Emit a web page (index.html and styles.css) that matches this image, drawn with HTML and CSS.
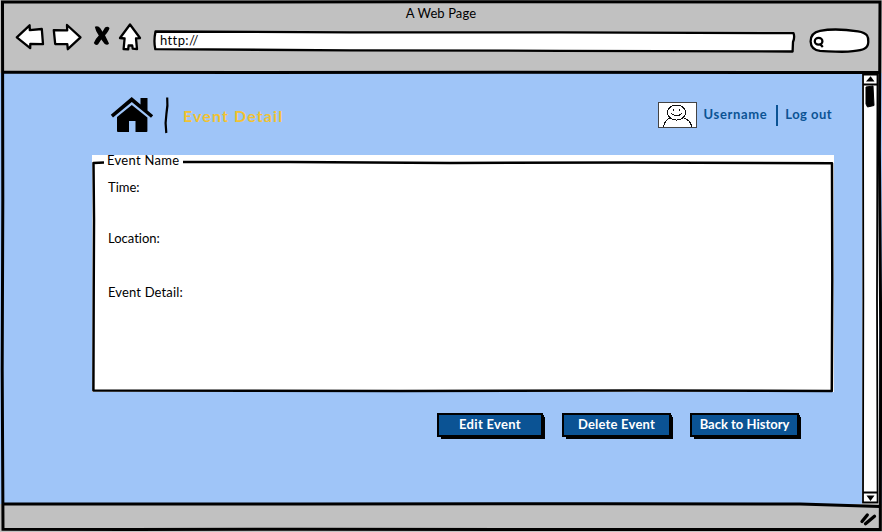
FILE: index.html
```html
<!DOCTYPE html>
<html lang="en">
<head>
<meta charset="utf-8">
<title>A Web Page</title>
<link rel="stylesheet" href="styles.css">
</head>
<body>
<div class="browser">
  <header class="chrome">
    <div class="window-title"><span class="t-window">A Web Page</span></div>
    <div class="toolbar">
      <svg class="nav-icon" width="35" height="34" viewBox="14 21 35 34"><path d="M16.8 37.3 29.6 25.3 29.8 30.2 41.8 29 43 44.2 30.3 44 30.2 48.2Z"/></svg>
      <svg class="nav-icon" width="38" height="34" viewBox="49 21 38 34"><path d="M53.8 30.2 67.2 30.4 67 25 80.5 37.3 67.8 49.2 67.3 44.1 55.2 44Z"/></svg>
      <svg width="27" height="34" viewBox="87 21 27 34"><path d="M94.8 26.8Q98 25 100.5 28.5L102.5 31.8 105 27.6Q107.5 25.6 109.5 28 109 31 105 35.3L109 43.5Q107.5 45.8 104.5 43.8L101.3 39.5 98 44.6Q95.5 45.8 93.8 43 95 39.5 98.8 35.6 95.5 31 94.8 26.8Z"/></svg>
      <svg class="nav-icon" width="36" height="34" viewBox="114 21 36 34"><path d="M130 24.5 140 38 136 38.4 137 49.2 132.7 48.6 132.2 45.3 128.6 45.5 128.2 49.3 123.6 49 124.6 38.5 120 38Z"/></svg>
      <div class="address">
        <svg class="outline" width="648" height="34" viewBox="150 21 648 34"><path d="M155.5 31.5 350 32.3 560 32.4 793.5 33.2Q795 37 793 42L792.6 51.5 560 50.8 350 50.3 155.3 49.2Q153.5 41 155.5 31.5Z"/></svg>
        <span class="t-url">http://</span>
      </div>
      <svg class="search" width="70" height="34" viewBox="806 21 70 34"><path d="M820 30.8C833 28.4 846 29.5 858 31.4 868 33 868.5 37 868.3 42 868 49 863 50 853 51.2 842 52.6 831 51.3 820 50.9 813 50 810.8 46 810.6 41.5 810.5 36 814 32 820 30.8Z"/><ellipse cx="818.6" cy="41.3" rx="3.8" ry="3.4"/><path d="M820 44 822.8 47"/></svg>
    </div>
  </header>

  <div class="viewport">
    <main class="page">
      <div class="page-head">
        <svg width="64" height="44" viewBox="108 92 64 44">
          <path d="M110.8 114.7 131.7 97 140.5 104.5V98H147.5V110.4L153.2 115.2 151 117.8 131.8 102 113 117.4Z"/>
          <path d="M117 117 131.8 105 147.4 117.5V131.2Q147.4 132 146.5 132H135.5V121H129V132H118Q117 132 117 131Z"/>
          <path d="M167.2 97.5Q168 105 166.4 114T166.3 133" fill="none" stroke="#000" stroke-width="2.2"/>
        </svg>
        <h1 class="t-heading">Event Detail</h1>
        <div class="account">
          <svg width="39" height="26" viewBox="0 0 39 26" fill="none" stroke="#111" shape-rendering="crispEdges"><rect x=".5" y=".5" width="38" height="25" fill="#fff" stroke="#444"/><ellipse cx="18.5" cy="10.5" rx="9" ry="7.5"/><path d="M5.5 25Q7 17 13 15.5M24 15.5Q32 17 34 25M13.5 11.5Q18.5 16 24 11.5"/><path d="M15.5 7v2M21.5 7v2"/></svg>
          <span class="t-user">Username</span>
          <i class="separator"></i>
          <span class="t-logout">Log out</span>
        </div>
      </div>

      <section class="card">
        <svg class="outline card-line" width="742" height="238" viewBox="92 155 742 238"><path d="M183 162 290 162 450 163 630 162.5 832 163.3 832.3 280 831.8 391 640 390.5 400 391 93.4 390.5 93.7 290 94 220 93.5 163 104 162.5"/></svg>
        <h2 class="t-legend">Event Name</h2>
        <p class="time"><span class="t-time">Time:</span></p>
        <p class="location"><span class="t-location">Location:</span></p>
        <p class="detail"><span class="t-detail">Event Detail:</span></p>
      </section>

      <div class="actions">
        <button class="b-edit"><span class="t-edit">Edit Event</span></button>
        <button class="b-delete"><span class="t-delete">Delete Event</span></button>
        <button class="b-back"><span class="t-back">Back to History</span></button>
      </div>
    </main>
    <svg class="scrollbar" width="20" height="431" viewBox="862 74 20 431">
      <rect x="862" y="74" width="17" height="431" fill="#fff"/>
      <path d="M863 75.5H877.5L877 300 877.6 503.5H863L863.3 300ZM863 85.5H877M863 493.5H877" fill="none" stroke="#000" stroke-width="1.8"/>
      <path d="M866 82.5 870.6 77.2 874.5 82.5ZM866.5 496.5H874.5L870.5 502Z"/>
      <path d="M866 88 873 87 874 106.5 867.5 108 866 105Z" stroke="#000" stroke-width="1"/>
    </svg>
  </div>

  <footer class="status">
    <svg width="24" height="24" viewBox="858 507 24 24"><path d="M862 521.5 867.3 515M865.5 523.8 874.5 516.3" fill="none" stroke="#000" stroke-width="3.3" stroke-linecap="round"/></svg>
  </footer>
  <svg class="frame" width="882" height="532" viewBox="0 0 882 532">
    <path d="M2.5 2 440 1.8 880 2 879.4 150 880.7 330 880.3 529.5 600 529.6 300 529.2 130 529.6 3 529.3 2.2 370 2.8 200Z"/>
    <path d="M3 72.3 250 72.6 500 72.3 880 72.6M3 504 300 504 600 503.7 800 504 880 506.5"/>
  </svg>
</div>
</body>
</html>
```

FILE: styles.css
```css
* { box-sizing: border-box; }
body {
  margin: 0;
  background: #fff;
  color: #000;
  font-family: Lato, "Liberation Sans", sans-serif;
  font-size: 13px;
  font-variant-ligatures: none;
}
h1, h2, p { margin: 0; font-weight: 400; font-size: 13px; }
svg { display: block; flex: none; }
span, h1, h2 { white-space: nowrap; }

.browser {
  position: relative;
  display: flex;
  flex-direction: column;
  width: 882px;
  height: 532px;
  overflow: hidden;
}
.frame {
  position: absolute;
  inset: 0;
  fill: none;
  stroke: #000;
  stroke-width: 3;
  pointer-events: none;
}

.chrome { height: 73px; padding-top: 4px; background: #c1c1c1; }
.window-title { height: 17px; line-height: 18px; text-align: center; letter-spacing: .1px; }
.toolbar { display: flex; padding-left: 14px; }
.nav-icon, .outline, .search { fill: #fff; stroke: #000; stroke-width: 2.3; stroke-linejoin: round; }
.outline { position: absolute; top: 0; left: 0; }
.address { position: relative; width: 648px; height: 34px; padding: 9px 0 0 10px; line-height: 20px; }
.address span { position: relative; letter-spacing: .4px; }
.search { margin-left: 8px; }

.viewport { display: flex; height: 431px; background: #9fc5f8; }
.page { width: 862px; padding: 19px 28px 0 92px; }
.scrollbar { background: #9fc5f8; }

.page-head { display: flex; height: 63px; padding-left: 16px; }
.t-heading { margin-left: 11px; line-height: 48px; font-size: 16px; font-weight: 700; letter-spacing: 1.1px; color: #f1c232; }
.account {
  display: flex;
  align-items: center;
  height: 26px;
  margin: 10px 2px 0 auto;
  color: #0b5394;
  font-weight: 700;
  line-height: 16px;
}
.t-user { margin: -2px 0 0 7px; letter-spacing: .65px; }
.t-logout { margin-top: -2px; letter-spacing: .45px; }
.separator { width: 2px; height: 21px; margin: 0 7px 0 9px; background: #0b5394; }

.card { position: relative; width: 742px; height: 237px; background: #fff; }
.card-line { fill: none; stroke-width: 2.5; }
.t-legend { width: max-content; margin-left: 15px; line-height: 10px; letter-spacing: .3px; }
.card p { padding-left: 16px; line-height: 20px; }
.time { margin-top: 12px; }
.location { margin-top: 31px; }
.detail { margin-top: 34px; letter-spacing: .15px; }

.actions { display: flex; margin: 21px 0 0 345px; }
.actions button {
  height: 24px;
  padding: 0 0 2px;
  border: 2px solid #000;
  background: #0b5394;
  box-shadow: 2px 1px 0 -1px #000, 3px 3px 0 -1px #000;
  color: #fff;
  font: 700 13px/18px Lato, "Liberation Sans", sans-serif;
}
.actions .b-edit { width: 106px; letter-spacing: .3px; }
.actions .b-delete { width: 109px; margin-left: 19px; letter-spacing: .2px; }
.actions .b-back { width: 109px; margin-left: 19px; }

.status { display: flex; justify-content: flex-end; height: 28px; padding-top: 3px; background: #c1c1c1; }
```
